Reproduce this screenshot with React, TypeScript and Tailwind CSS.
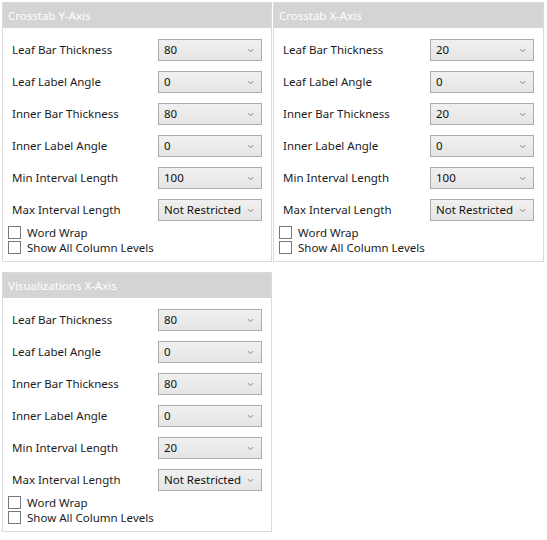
import React from "react";

type Row = { label: string; value: string };

const Chevron = () => (
  <svg width="7" height="5" viewBox="0 0 7 5" className="shrink-0">
    <path d="M1 1.2 L3.5 3.7 L6 1.2" fill="none" stroke="#7d7d7d" strokeWidth="1" />
  </svg>
);

const Combo = ({ value }: { value: string }) => (
  <div className="w-[104px] h-[22px] border border-[#acacac] bg-gradient-to-b from-[#f0f0f0] to-[#e5e5e5] flex items-center justify-between pl-[5px] pr-[7px] text-[11.5px] text-[#111]">
    <span className="whitespace-nowrap">{value}</span>
    <Chevron />
  </div>
);

const Check = ({ label }: { label: string }) => (
  <div className="flex items-center h-[15px] gap-[6px]">
    <div className="w-[13px] h-[13px] border border-[#777] bg-white shrink-0" />
    <span className="text-[11.5px] text-[#1c1c1c] leading-[15px]">{label}</span>
  </div>
);

const Panel = ({ title, rows, w }: { title: string; rows: Row[]; w: string }) => (
  <div className={`${w} h-[260px] border border-[#dadada] bg-white flex flex-col`}>
    <div className="h-[25px] shrink-0 bg-[#d4d4d4] flex items-center pl-[5px] text-[11.5px] text-white">{title}</div>
    <div className="flex flex-col gap-[10px] pt-[11px] pl-[9px] pr-[9px]">
      {rows.map((r) => (
        <div key={r.label} className="flex items-center justify-between h-[22px]">
          <span className="text-[11.5px] text-[#1c1c1c]">{r.label}</span>
          <Combo value={r.value} />
        </div>
      ))}
    </div>
    <div className="flex flex-col pl-[5px] pt-[4px]">
      <Check label="Word Wrap" />
      <Check label="Show All Column Levels" />
    </div>
  </div>
);

const mk = (a: string, b: string, c: string) => [
  { label: "Leaf Bar Thickness", value: a },
  { label: "Leaf Label Angle", value: "0" },
  { label: "Inner Bar Thickness", value: b },
  { label: "Inner Label Angle", value: "0" },
  { label: "Min Interval Length", value: c },
  { label: "Max Interval Length", value: "Not Restricted" },
];

export default function App() {
  return (
    <div
      className="w-[547px] h-[540px] bg-white pl-[2px] pt-[2px] flex flex-col gap-[10px]"
      style={{ fontFamily: '"Noto Sans", "Open Sans", sans-serif' }}
    >
      <div className="flex gap-[1px]">
        <Panel title="Crosstab Y-Axis" rows={mk("80", "80", "100")} w="w-[270px]" />
        <Panel title="Crosstab X-Axis" rows={mk("20", "20", "100")} w="w-[271px]" />
      </div>
      <Panel title="Visualizations X-Axis" rows={mk("80", "80", "20")} w="w-[270px]" />
    </div>
  );
}
